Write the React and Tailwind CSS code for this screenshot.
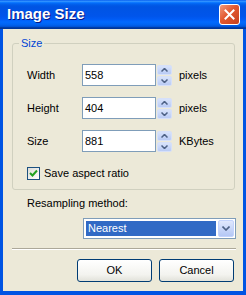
import React from "react";

const font = { fontFamily: '"Liberation Sans", Arial, sans-serif' };

function Spinner() {
  return (
    <div className="ml-[1px] flex h-[21px] w-[15px] flex-col gap-[1px]">
      <div className="flex flex-1 items-center justify-center rounded-[2px] border border-[#d6e0f9] bg-[linear-gradient(to_bottom,#d8e3fb,#b9cbf5)]">
        <svg width="7" height="4" viewBox="0 0 7 4">
          <path d="M0.5 3.5 L3.5 0.5 L6.5 3.5" fill="none" stroke="#4d6185" strokeWidth="1.5" />
        </svg>
      </div>
      <div className="flex flex-1 items-center justify-center rounded-[2px] border border-[#d6e0f9] bg-[linear-gradient(to_bottom,#d8e3fb,#b9cbf5)]">
        <svg width="7" height="4" viewBox="0 0 7 4">
          <path d="M0.5 0.5 L3.5 3.5 L6.5 0.5" fill="none" stroke="#4d6185" strokeWidth="1.5" />
        </svg>
      </div>
    </div>
  );
}

function Field({ label, value, unit }) {
  return (
    <div className="flex h-[22px] items-center">
      <span className="w-[55px]">{label}</span>
      <div className="flex h-[22px] w-[74px] items-center border border-[#7f9db9] bg-white pl-[2px]">
        {value}
      </div>
      <Spinner />
      <span className="ml-[7px]">{unit}</span>
    </div>
  );
}

function Button({ children }) {
  return (
    <button className="flex h-[23px] w-[75px] items-center justify-center rounded-[3px] border border-[#003c74] bg-[linear-gradient(to_bottom,#ffffff,#f3f3ef_70%,#e2e2da)] text-[11px] text-black">
      {children}
    </button>
  );
}

export default function App() {
  return (
    <div
      className="flex h-[295px] w-[246px] flex-col bg-[#0054e3] text-[11px] text-black"
      style={font}
    >
      {/* title bar */}
      <div className="flex h-[29px] items-center justify-between bg-[linear-gradient(to_bottom,#0058ee_0%,#3593ff_4%,#288eff_6%,#127dff_8%,#036ffc_10%,#0262ee_14%,#0057e5_20%,#0054e3_24%,#0055eb_56%,#005bf5_66%,#026afe_76%,#0062ef_86%,#0052d6_92%,#0040ab_94%,#003092_100%)] pl-[7px] pr-[6px]">
        <span className="text-[15px] font-bold text-white [text-shadow:1px_1px_#0a1883]">
          Image Size
        </span>
        <div className="flex h-[21px] w-[21px] items-center justify-center rounded-[3px] border border-white bg-[linear-gradient(135deg,#f19a7c,#e2582f_45%,#c7401d)]">
          <svg width="11" height="11" viewBox="0 0 11 11">
            <path d="M1.5 1.5 L9.5 9.5 M9.5 1.5 L1.5 9.5" stroke="white" strokeWidth="2" strokeLinecap="square" />
          </svg>
        </div>
      </div>

      {/* client area */}
      <div className="mx-[3px] mb-[4px] flex flex-1 flex-col bg-[#ece9d8] pl-[9px]">
        <div className="relative mt-[14px] h-[147px] w-[223px] rounded-[3px] border border-[#d0d0bf] pl-[14px] pt-[20px]">
          <span className="absolute -top-[7px] left-[6px] bg-[#ece9d8] px-[2px] leading-[13px] text-[#0046d5]">
            Size
          </span>
          <div className="flex flex-col gap-[11px]">
            <Field label="Width" value="558" unit="pixels" />
            <Field label="Height" value="404" unit="pixels" />
            <Field label="Size" value="881" unit="KBytes" />
          </div>
          <div className="mt-[15px] flex h-[13px] items-center gap-[4px]">
            <div className="flex h-[13px] w-[13px] items-center justify-center border border-[#1c5180] bg-[linear-gradient(135deg,#dcdcd7,#ffffff)]">
              <svg width="9" height="9" viewBox="0 0 9 9">
                <path d="M1 4 L3.5 6.5 L8 1.5" fill="none" stroke="#21a121" strokeWidth="2" />
              </svg>
            </div>
            <span>Save aspect ratio</span>
          </div>
        </div>

        <div className="mt-[7px] pl-[15px] leading-[13px]">Resampling method:</div>

        <div className="ml-[71px] mt-[8px] flex h-[21px] w-[153px] border border-[#7f9db9] bg-white p-[1px]">
          <div className="m-[1px] mr-[2px] flex flex-1 items-center bg-[#316ac5] pl-[2px] text-white">
            Nearest
          </div>
          <div className="flex w-[16px] items-center justify-center rounded-[2px] border border-[#c3d3fd] bg-[linear-gradient(to_bottom,#e0e8fd,#b4c7f5)]">
            <svg width="8" height="5" viewBox="0 0 8 5">
              <path d="M0.5 0.5 L4 4 L7.5 0.5" fill="none" stroke="#4d6185" strokeWidth="1.6" />
            </svg>
          </div>
        </div>

        <div className="mt-[9px] h-[2px] w-[224px] border-t border-b border-t-[#aca899] border-b-white" />

        <div className="mt-[9px] flex w-[222px] justify-end gap-[7px]">
          <Button>OK</Button>
          <Button>Cancel</Button>
        </div>
      </div>
    </div>
  );
}
